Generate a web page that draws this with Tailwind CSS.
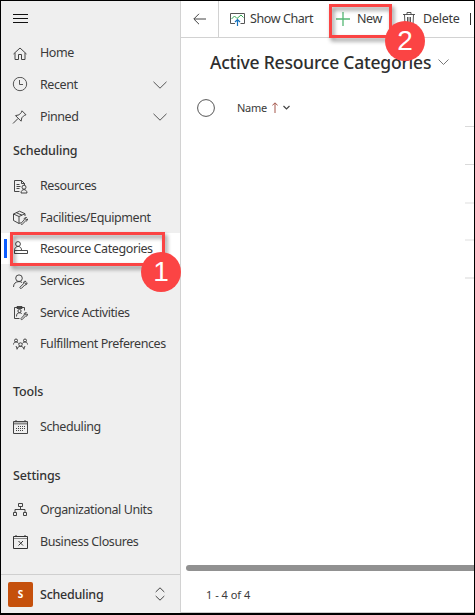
<!DOCTYPE html>
<html lang="en">
<head>
<meta charset="utf-8">
<title>Active Resource Categories</title>
<script src="https://cdn.jsdelivr.net/npm/@tailwindcss/browser@4"></script>
</head>
<body class="w-[475px] h-[615px] overflow-hidden bg-white text-[#3a3a3a] font-['Noto_Sans',sans-serif]">
<div class="relative flex w-[475px] h-[615px] border border-b-2 border-black overflow-hidden">
  <nav class="w-[180px] shrink-0 flex flex-col bg-[#efefef] border-r border-[#d2d2d2] text-[12.5px] tracking-[-0.41px] whitespace-nowrap">
    <div class="h-[36px] pl-3 pt-[12px] shrink-0">
      <svg class="w-[15px] h-[11px]" viewBox="0 0 15 11" fill="none" stroke="#111"><path d="M0 1.5h15M0 5.5h15M0 9.5h15"/></svg>
    </div>
    <div class="h-[31.6px] flex items-center pl-[11px] pt-[2px]"><svg class="w-4 h-4 mr-3" viewBox="0 0 16 16" fill="none" stroke="#444"><path d="M1.500 8 8 2 14.500 8M3 7v6.500h3.500v-5h3v5H13V7"/></svg><span>Home</span></div>
    <div class="h-[31.6px] flex items-center pl-[11px] pt-[2px]"><svg class="w-4 h-4 mr-3" viewBox="0 0 16 16" fill="none" stroke="#555"><circle cx="8" cy="7" r="6.700"/><path d="M7.500 3v4.500H11"/></svg><span class="grow">Recent</span><svg class="w-[14px] h-2 mr-[13px]" viewBox="0 0 14 8" fill="none" stroke="#555"><path d="M.5.8 7 7.200 13.500.8"/></svg></div>
    <div class="h-[31.6px] flex items-center pl-[11px] pt-[2px]"><svg class="w-4 h-4 mr-3" viewBox="0 0 16 16" fill="none" stroke="#444"><path d="M10 1.800 14 5.800l-1.700.5L9.800 8.800l-.7 3.400L3.500 6.600l3.400-.7 2.500-2.500zM6 9.500 1 14.500"/></svg><span class="grow">Pinned</span><svg class="w-[14px] h-2 mr-[13px]" viewBox="0 0 14 8" fill="none" stroke="#555"><path d="M.5.8 7 7.200 13.500.8"/></svg></div>
    <div class="h-[37.7px] flex items-center pl-3 pt-[2px] font-medium tracking-[-0.15px] text-[#333]"><span>Scheduling</span></div>
    <div class="h-[31.6px] flex items-center pl-[11px] pt-[3px]"><svg class="w-4 h-4 mr-3" viewBox="0 0 16 16" fill="none" stroke="#333" stroke-width=".9"><path d="M7.500 12.500h-5v-11h7l3 3V6M9.500 1.500v3h3M4.500 5.500h3M4.500 7.500h4M4.500 9.500h3"/><circle cx="12" cy="8.200" r="2"/><path d="M9 14c0-4.500 6-4.500 6 0z"/></svg><span>Resources</span></div>
    <div class="h-[31.6px] flex items-center pl-[11px] pt-[3px]"><svg class="w-4 h-4 mr-3" viewBox="0 0 16 16" fill="none" stroke="#333" stroke-width=".9"><path d="M8.500 12.500 7 13.500l-5.500-3V4L7.500 1.200 13 3.700V6M1.500 4 7 6.500l6-2.800M7 6.500v7M4.300 2.700 10 5.200M9 13.300l3.300-3.500c-.5-1.500.5-2.600 2.200-2.300l-1.200 1.400.9.900 1.300-.8c.2 1.500-.8 2.200-2 2l-3.300 3.300c-.8.500-1.600-.2-1.200-1z"/></svg><span>Facilities/Equipment</span></div>
    <div class="h-[31.6px] flex items-center pl-[3px] bg-white"><span class="w-[3px] h-[19px] bg-[#0b5cff] mr-[5px]"></span><svg class="w-4 h-4 mr-3" viewBox="0 0 16 16" fill="none" stroke="#333" stroke-width=".9"><circle cx="6" cy="4" r="2.400"/><path d="M2.500 10.500c0-5.300 7-5.300 7-.5M2.500 10.500h13v3h-13z"/></svg><span class="pt-[2px]">Resource Categories</span></div>
    <div class="h-[31.6px] flex items-center pl-[11px] pt-[3px]"><svg class="w-4 h-4 mr-3" viewBox="0 0 16 16" fill="none" stroke="#333" stroke-width=".9"><circle cx="7" cy="4.200" r="3.300"/><path d="M1.500 13c0-3.500 2.200-5.400 5.500-5.400 1.300 0 2.200.3 3 .9M8 13.200l3.500-3.500c-.5-1.500.5-2.700 2.400-2.400l-1.400 1.500 1 1 1.500-1.100c.3 1.600-.8 2.400-2 2.100l-3.500 3.500c-1 .5-2-.2-1.500-1.100z"/></svg><span>Services</span></div>
    <div class="h-[31.6px] flex items-center pl-[11px] pt-[3px]"><svg class="w-4 h-4 mr-3" viewBox="0 0 16 16" fill="none" stroke="#333" stroke-width=".9"><path d="M7.500 13.500h-5v-11h10V5.500M5 3.500v-2h5v2zM4.500 11.500c0-2.700 1-3.700 3-3.700 1 0 1.700.3 2.200.8M9 13.500l3.300-3.500c-.5-1.500.5-2.700 2.200-2.300l-1.200 1.400.9.900 1.300-.8c.2 1.500-.8 2.200-2 2l-3.300 3.200c-.8.500-1.600-.1-1.200-.9z"/><circle cx="7.500" cy="6" r="1.600"/></svg><span>Service Activities</span></div>
    <div class="h-[31.6px] flex items-center pl-[11px] pt-[3px]"><svg class="w-4 h-4 mr-3" viewBox="0 0 16 16" fill="none" stroke="#333" stroke-width=".9"><circle cx="4" cy="3.500" r="1.500"/><circle cx="13" cy="3.500" r="1.500"/><circle cx="8.500" cy="7.500" r="1.700"/><path d="M1.500 7.500c0-3 4-3.500 5-1M15.500 7.500c0-3-4-3.500-5-1M5 12.500c0-4.200 7-4.200 7 0M4 9l1.300 3M13 9l-1.300 3"/></svg><span>Fulfillment Preferences</span></div>
    <div class="h-[51.5px] shrink-0 flex items-end pb-[9px] pl-3 font-medium tracking-[-0.15px] text-[#333]"><span>Tools</span></div>
    <div class="h-[31.6px] flex items-center pl-[11px] pt-[3px]"><svg class="w-4 h-4 mr-3" viewBox="0 0 16 16" fill="none" stroke="#444"><path d="M1.500 1.500h14v12h-14zM4 0v2M13 0v2"/><path d="M2 3.500h13" stroke="#888" stroke-width="2"/><path d="M6 6.500h8M4 8.500h10M4 10.500h8" stroke-dasharray="1 1"/></svg><span>Scheduling</span></div>
    <div class="h-[51.5px] shrink-0 flex items-end pb-[8px] pl-3 font-medium tracking-[-0.15px] text-[#333]"><span>Settings</span></div>
    <div class="h-[31.6px] flex items-center pl-[11px] pt-[2px]"><svg class="w-4 h-4 mr-3" viewBox="0 0 16 16" fill="none" stroke="#444"><path d="M6.500 1.500h4v3h-4zM1.500 10.500h3v3h-3zM11.500 10.500h3v3h-3zM8.500 4.500v3M3 10.500v-3h10v3"/></svg><span>Organizational Units</span></div>
    <div class="h-[31.6px] flex items-center pl-[11px] pt-[3px]"><svg class="w-4 h-4 mr-3" viewBox="0 0 16 16" fill="none" stroke="#333"><path d="M1.500 1.500h14v12h-14zM4 0v2M13 0v2M6.500 6l4.500 4.500M11 6l-4.500 4.500"/><path d="M2 3.500h13" stroke="#888"/></svg><span>Business Closures</span></div>
    <div class="mt-auto h-[39px] shrink-0 flex items-center border-t border-[#cfcfcf] pl-[7px] tracking-[-0.25px] text-[#333]">
      <span class="w-[25px] h-[25px] rounded-[2px] bg-[#c5500c] text-white text-[10px] font-bold flex items-center justify-center mr-[7px]">S</span><span class="grow font-medium pt-[2px]">Scheduling</span>
      <svg class="w-[10px] h-[14px] mr-[15px]" viewBox="0 0 10 14" fill="none" stroke="#444"><path d="M.7 5 5 .8 9.300 5M.7 9 5 13.200 9.300 9"/></svg>
    </div>
  </nav>
  <main class="grow min-w-0 flex flex-col border-b border-[#ccc]">
    <div class="h-[37px] shrink-0 flex items-center border-b border-[#d2d2d2] text-[12.5px] tracking-[-0.41px] whitespace-nowrap overflow-hidden">
      <div class="w-[38px] h-full shrink-0 border-r border-[#d2d2d2] flex items-center pl-3"><svg class="w-[13px] h-3 -mt-px" viewBox="0 0 13 12" fill="none" stroke="#444"><path d="M13 6H1M6 .8.8 6 6 11.200"/></svg></div>
      <svg class="w-[15px] h-[15px] ml-[11px] mr-[5px] shrink-0" viewBox="0 0 15 15" fill="none"><path d="M5 11.500H.5V1.500h14v10h-4" stroke="#555"/><path d="m1.500 7 3-3L7 6.500 11 3l2.500 2.500" stroke="#35a854"/><path d="M7.500 14V7.500M5 10l2.500-2.500L10 10" stroke="#1672bd" stroke-width="1.200"/></svg>
      <span class="w-[86px]">Show Chart</span>
      <svg class="w-[14px] h-[14px] mr-[7px] shrink-0" viewBox="0 0 14 14" fill="none" stroke="#55b774" stroke-width="1.300"><path d="M7 0v14M0 7h14"/></svg>
      <span class="w-[46px]">New</span>
      <svg class="w-3 h-[14px] mr-[8px] shrink-0" viewBox="0 0 12 14" fill="none" stroke="#444"><path d="M0 2.500h12M4 2.500v-2h4v2M1.500 2.500l.5 11h8l.5-11M4.500 5v6.500M6 5v6.500M7.500 5v6.500" stroke-width=".9"/></svg>
      <span class="w-[47px] tracking-[-0.25px]">Delete</span><span class="w-px h-3 bg-[#333]"></span>
    </div>
    <div class="h-[50px] shrink-0 flex items-center pl-[29px] pb-[2px] whitespace-nowrap text-[#2e2e2e]"><h1 class="text-[17.500px] font-medium tracking-[-0.22px] w-[221px]">Active Resource Categories</h1><svg class="w-[11px] h-[6px] ml-[7px]" viewBox="0 0 11 6" fill="none" stroke="#777"><path d="m.5.5 5 5 5-5"/></svg></div>
    <div class="h-[39px] shrink-0 flex items-center pl-4 text-[11px] tracking-[-0.3px]"><svg class="w-[18px] h-[18px] mr-[22px]" viewBox="0 0 18 18" fill="none" stroke="#555"><circle cx="9" cy="9" r="8.400"/></svg><span class="w-[35px] pt-px">Name</span><svg class="w-[6px] h-[11px]" viewBox="0 0 6 11" fill="none" stroke="#a4574b"><path d="M3 11V1M.3 3.500 3 .8l2.700 2.700"/></svg><svg class="w-[7px] h-[5px] ml-[5px]" viewBox="0 0 7 5" fill="none" stroke="#444" stroke-width="1.200"><path d="m.5 1 3 3 3-3"/></svg></div>
    <div class="h-[152px] shrink-0 flex flex-col items-end">
      <div class="h-[38px] w-[9px] mt-[-1px] border-t border-[#dadada]"></div>
      <div class="h-[38px] w-[9px] border-t border-[#dadada]"></div>
      <div class="h-[38px] w-[9px] border-t-2 border-[#efefef]"></div>
      <div class="h-[38px] w-[9px] border-t-2 border-[#efefef]"></div>
      <div class="h-[2px] w-[9px] bg-[#ebebeb]"></div>
    </div>
    <div class="mt-auto ml-[5px] h-[6px] rounded-l-full bg-[#919191]"></div>
    <div class="h-[41px] shrink-0 flex items-center pl-[25px] pt-[7px] text-[11px]"><span>1 - 4 of 4</span></div>
  </main>
  <div class="absolute left-[9px] top-[231px] w-[155px] h-[34px] border-3 border-[#fb4444] drop-shadow-[2px_3px_2px_rgba(0,0,0,0.45)]"></div>
  <div class="absolute left-[140px] top-[251px] size-10 rounded-full bg-[#fb4444] text-white font-['Liberation_Sans',sans-serif] text-[28px] leading-10 text-center">1</div>
  <div class="absolute left-[328px] top-[3px] w-[63px] h-[34px] border-3 border-[#fb4444] drop-shadow-[2px_3px_2px_rgba(0,0,0,0.45)]"></div>
  <div class="absolute left-[384px] top-[20px] size-10 rounded-full bg-[#fb4444] text-white font-['Liberation_Sans',sans-serif] text-[28px] leading-10 text-center">2</div>
</div>
</body>
</html>
